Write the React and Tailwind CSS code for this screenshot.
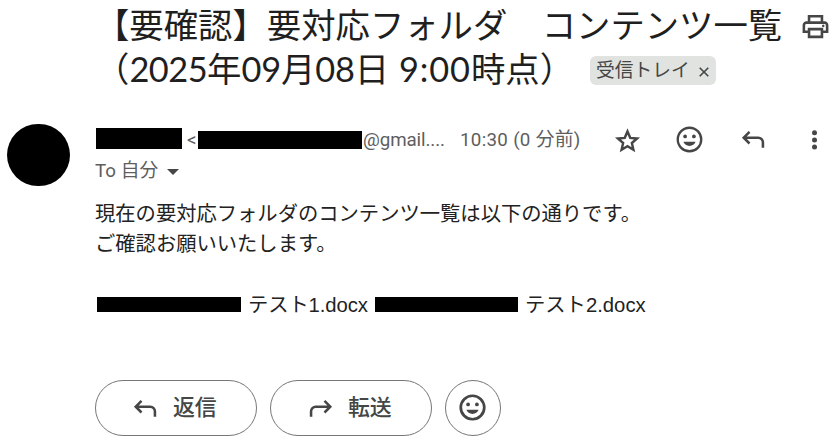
const fonts = {
  title: "font-['Lato','Noto_Sans_CJK_JP',sans-serif]",
  body: "font-['Liberation_Sans','Noto_Sans_CJK_JP',sans-serif]",
  ui: "font-['Roboto','Noto_Sans_CJK_JP',sans-serif]",
};

function PrintIcon() {
  return (
    <svg className="block size-[31px]" viewBox="0 -960 960 960" fill="currentColor">
      <path d="M640-640v-120H320v120h-80v-200h480v200h-80Zm-480 80h640-640Zm560 100q17 0 28.500-11.500T760-500q0-17-11.500-28.500T720-540q-17 0-28.500 11.500T680-500q0 17 11.500 28.500T720-460Zm-80 260v-160H320v160h320Zm80 80H240v-160H80v-240q0-51 35-85.500t85-34.500h560q51 0 85.500 34.500T880-520v240H720v160Zm80-240v-160q0-17-11.500-28.500T760-560H200q-17 0-28.500 11.500T160-520v160h80v-80h480v80h80Z" />
    </svg>
  );
}

function StarIcon() {
  return (
    <svg className="block size-[29px]" viewBox="0 0 24 24" fill="none" stroke="currentColor" strokeWidth="2">
      <path d="m12 4.500 2.250 5.300 5.700.500-4.350 3.750 1.300 5.550L12 16.650 7.100 19.600l1.300-5.550L4.050 10.300l5.700-.500z" />
    </svg>
  );
}

function SmileIcon({ bold }) {
  return (
    <svg className="block size-[31px]" viewBox="0 0 24 24" fill="currentColor">
      <circle cx="12" cy="12" r="9.100" fill="none" stroke="currentColor" strokeWidth={bold ? 2.1 : 1.8} />
      <circle cx="8.600" cy="9.600" r="1.450" />
      <circle cx="15.400" cy="9.600" r="1.450" />
      <path d="M7.300 13.800h9.400c-.700 1.900-2.500 3.200-4.700 3.200s-4-1.300-4.700-3.200z" />
    </svg>
  );
}

function ReplyIcon({ flip }) {
  return (
    <svg
      className={flip ? "block size-[29px] -scale-x-100" : "block size-[29px]"}
      viewBox="0 0 24 24"
      fill="none"
      stroke="currentColor"
      strokeWidth="2.100"
    >
      <path d="M8.700 5.700 3.900 10.500l4.800 4.800M4 10.500h12a3.800 3.800 0 0 1 3.800 3.800v4.500" />
    </svg>
  );
}

function MoreIcon() {
  return (
    <svg className="block h-5 w-[5px]" viewBox="0 0 5 20" fill="currentColor">
      <circle cx="2.500" cy="2.700" r="2.500" />
      <circle cx="2.500" cy="9.900" r="2.500" />
      <circle cx="2.500" cy="17.100" r="2.500" />
    </svg>
  );
}

function Subject() {
  return (
    <header className={`flex pl-[95px] text-[34.375px] leading-[44px] text-[#1f1f1f] ${fonts.title}`}>
      <h1 className="w-[705px] whitespace-nowrap">
        <span className="block">【要確認】要対応フォルダ　コンテンツ一覧</span>
        <span className="flex items-center">
          <span className="w-[495px]">
            （<span className="tracking-[-0.5px]">2025</span>年<span className="tracking-[-0.2px]">09</span>月
            <span className="tracking-[-0.2px]">08</span>日 <span className="ml-[1px] tracking-[0.9px]">9:00</span>時点）
          </span>
          <span className="mt-[2px] flex h-[29px] w-[126px] items-center gap-[9px] rounded-[6px] bg-[#e1e3e1] pl-[6px] text-[18.75px] leading-none text-[#444746]">
            受信トレイ
            <svg className="mt-[3px] size-[10px]" viewBox="0 0 10 10" fill="none" stroke="currentColor" strokeWidth="1.600">
              <path d="m.700.700 8.600 8.600m0-8.600L.700 9.300" />
            </svg>
          </span>
        </span>
      </h1>
      <div className="pt-[8px] text-[#444746]">
        <PrintIcon />
      </div>
    </header>
  );
}

function Sender() {
  return (
    <section className={`flex pl-[7px] text-[18.75px] text-[#5e5e5e] ${fonts.ui}`}>
      <div className="mt-[1px] h-[62px] w-[63px] shrink-0 rounded-full bg-black" />
      <div className="ml-[25px] flex-1">
        <div className="mt-[1px] flex h-[32px] items-center whitespace-nowrap">
          <span className="mb-[3px] ml-[1px] h-[21px] w-[86px] bg-black" />
          <span className="w-[16px] pl-[5px]">&lt;</span>
          <span className="h-[18px] w-[164px] bg-black" />
          <span className="w-[98px] pl-[1px] tracking-[-0.1px]">@gmail....</span>
          <span className="tracking-[0.3px]">10:30 (0 分前)</span>
        </div>
        <div className="flex h-[31px] items-center">
          <span>To 自分</span>
          <span className="ml-[9px] border-x-[6px] border-t-[6px] border-x-transparent border-t-[#444746]" />
        </div>
      </div>
      <div className="flex h-[33px] w-[223px] items-center text-[#444746]">
        <span className="w-[61px] pt-[2px]"><StarIcon /></span>
        <span className="w-[65px]"><SmileIcon /></span>
        <span className="w-[73px]"><ReplyIcon /></span>
        <MoreIcon />
      </div>
    </section>
  );
}

function Message() {
  return (
    <section className={`pl-[95px] text-[20.3125px] leading-[30.47px] text-[#222222] ${fonts.body}`}>
      <p>現在の要対応フォルダのコンテンツ一覧は以下の通りです。</p>
      <p>ご確認お願いいたします。</p>
      <p className="mt-[30px] flex items-center whitespace-nowrap">
        <span className="mb-[1px] ml-[2px] h-[15px] w-[144px] bg-black" />
        <span className="w-[134px] pl-[7px] tracking-[-0.1px]">テスト1.docx</span>
        <span className="mb-[1px] h-[15px] w-[143px] bg-black" />
        <span className="pl-[7px]">テスト2.docx</span>
      </p>
    </section>
  );
}

function Actions() {
  const pill = "flex h-[56px] w-[162px] items-center gap-[13px] rounded-full border border-[#747775] pl-[35px]";
  return (
    <footer className={`flex gap-[13px] pl-[95px] text-[21.875px] font-medium text-[#444746] ${fonts.ui}`}>
      <button className={pill}><ReplyIcon />返信</button>
      <button className={pill}><ReplyIcon flip />転送</button>
      <button className="flex size-[56px] items-center justify-center rounded-full border border-[#747775] pb-[1px] pr-[1px]">
        <SmileIcon bold />
      </button>
    </footer>
  );
}

export default function App() {
  return (
    <main className="h-[442px] w-[836px] overflow-hidden bg-white pt-[3px]">
      <Subject />
      <div className="mt-[32px]"><Sender /></div>
      <div className="mt-[12px]"><Message /></div>
      <div className="mt-[60px]"><Actions /></div>
    </main>
  );
}
